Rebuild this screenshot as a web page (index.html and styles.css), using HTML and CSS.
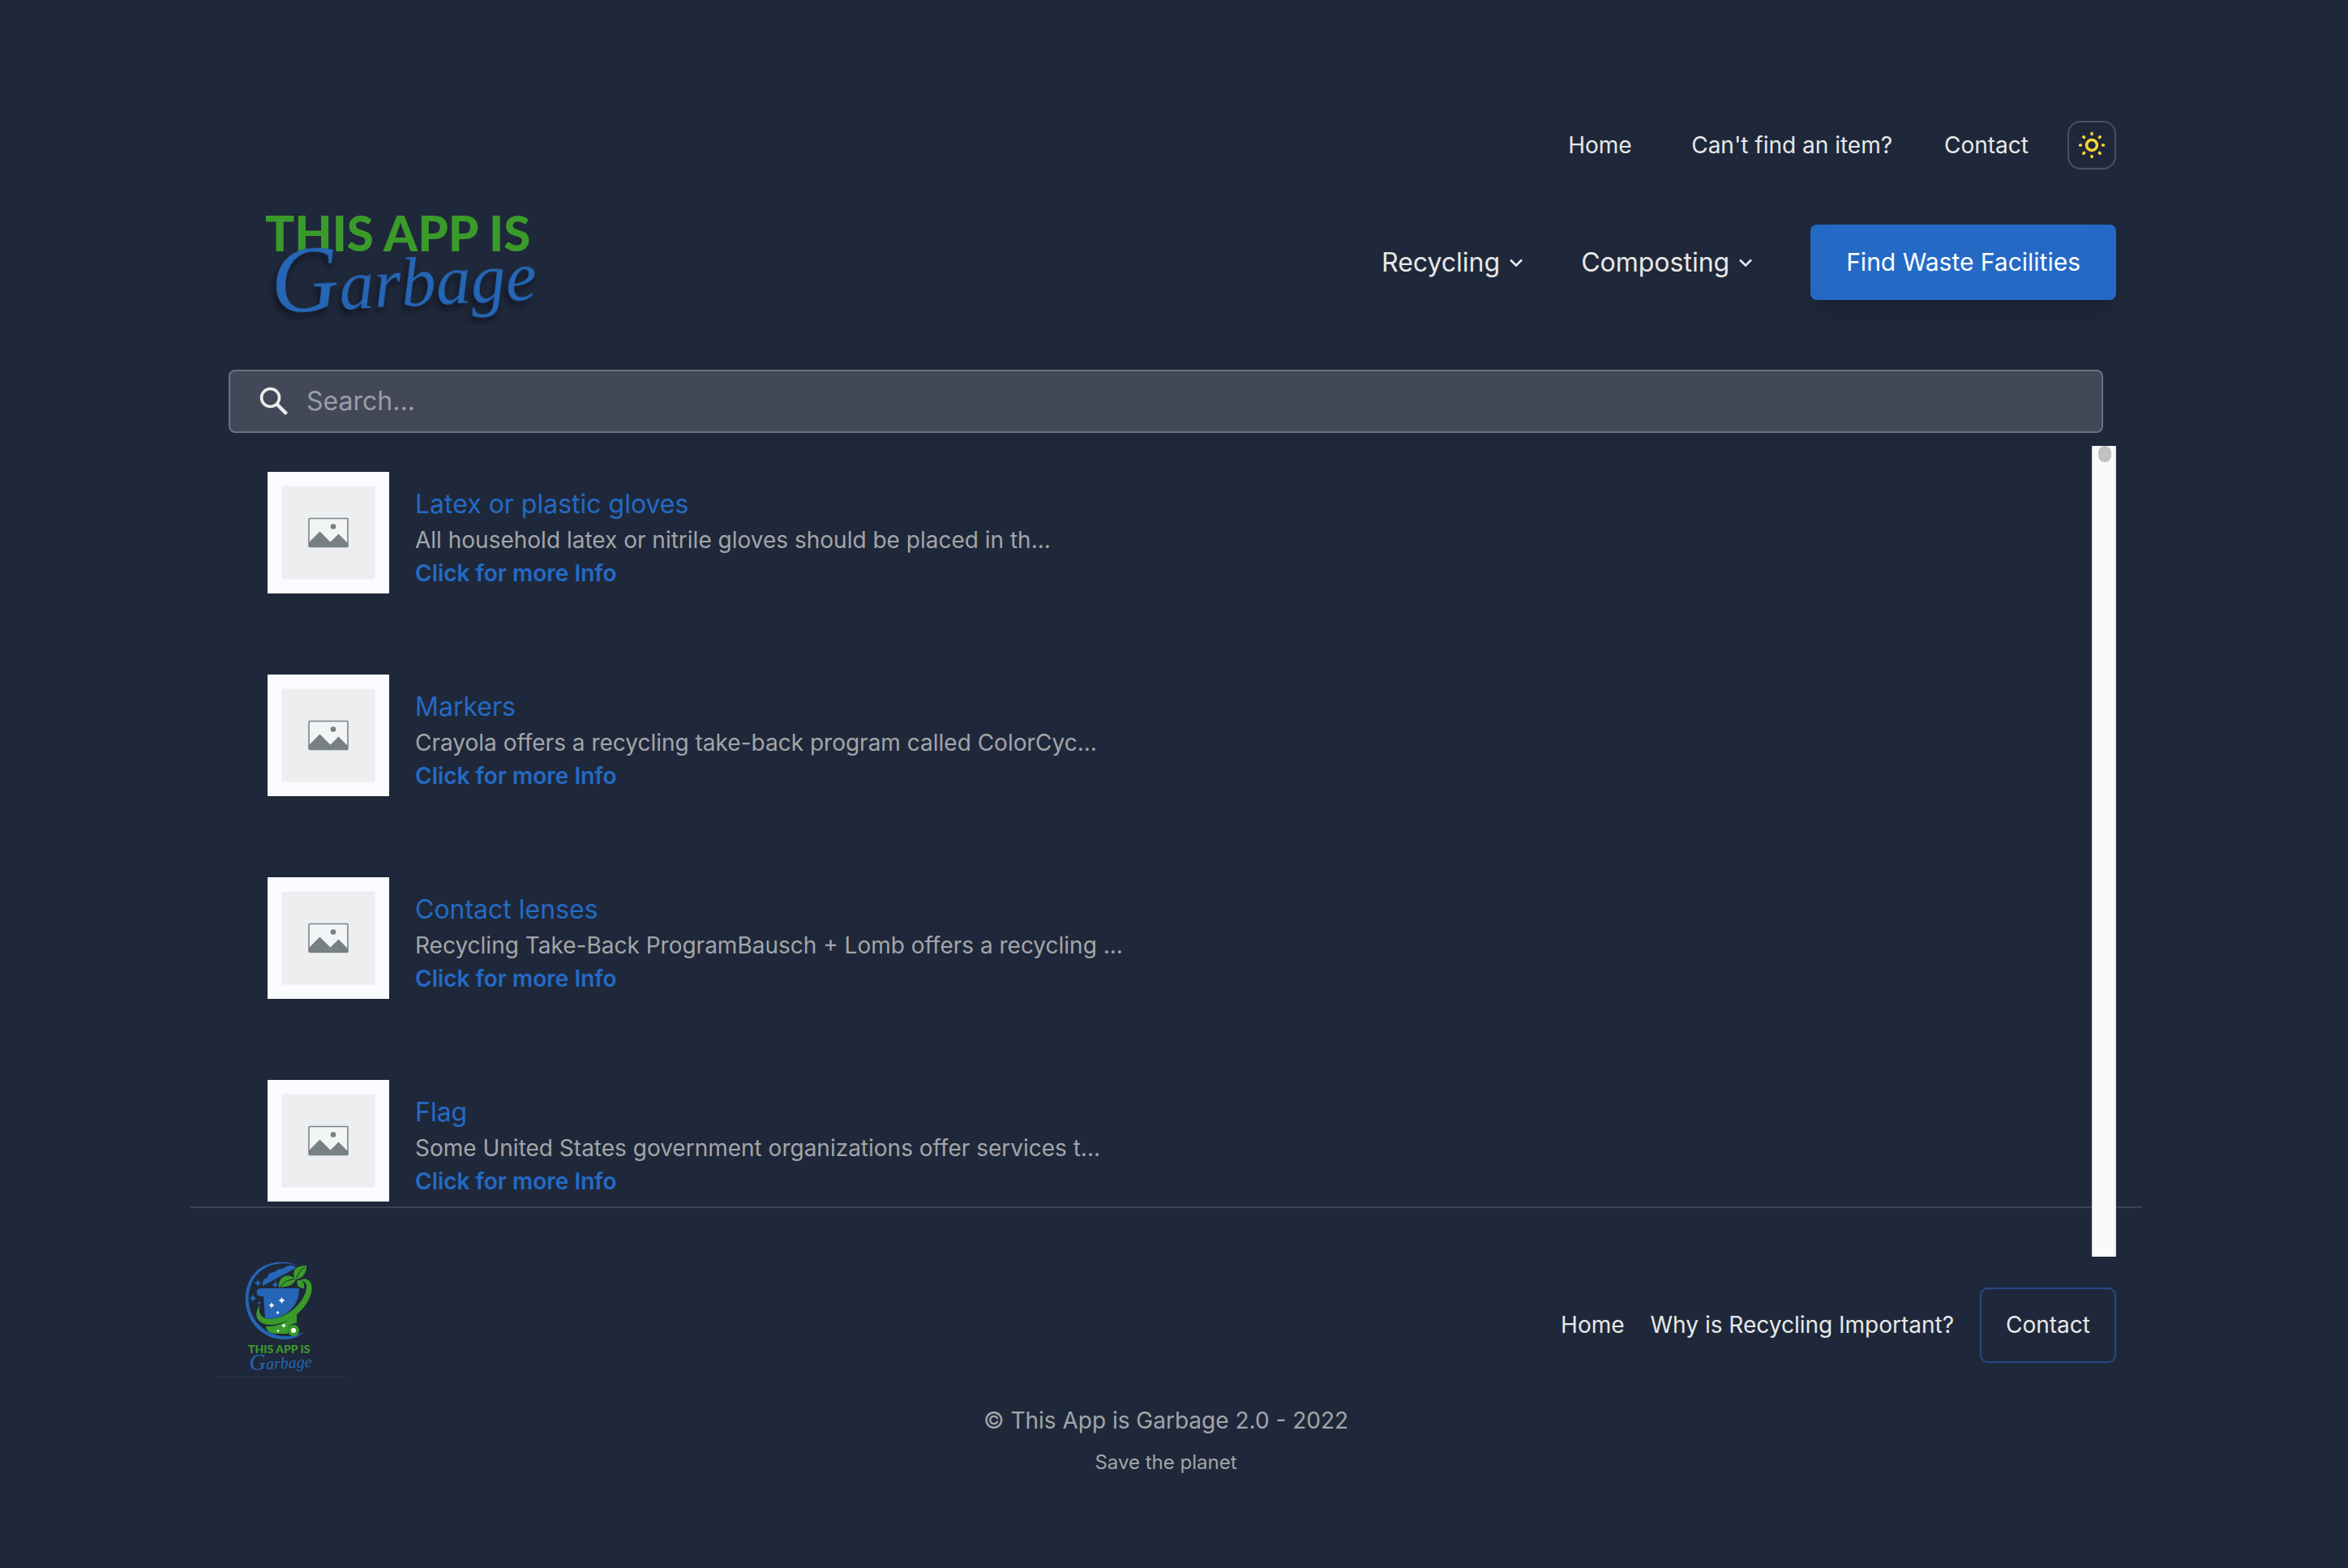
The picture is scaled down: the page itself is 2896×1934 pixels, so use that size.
FILE: index.html
```html
<!DOCTYPE html>
<html lang="en">
<head>
<meta charset="utf-8">
<meta name="viewport" content="width=device-width, initial-scale=1">
<title>This App is Garbage</title>
<link rel="stylesheet" href="styles.css">
</head>
<body>
<svg class="sprite" aria-hidden="true">
  <symbol id="chevron" viewBox="0 0 16 16"><path d="M1 4.500l7 7 7-7" fill="none" stroke="currentColor" stroke-width="2.600"/></symbol>
  <symbol id="picture" viewBox="0 0 150 150">
    <rect width="150" height="150" fill="#fafcff"/>
    <rect x="17.500" y="17.500" width="115" height="115" fill="#eceef0"/>
    <rect x="51" y="57.500" width="48" height="35" rx="1" fill="#f2f4f5" stroke="#7c8488" stroke-width="1.600"/>
    <path d="M51 87L64.500 73.500 77.500 86.500 87.500 76.500 99 88V92.500H51Z" fill="#778083"/>
    <circle cx="81" cy="67.500" r="3.300" fill="#778083"/>
  </symbol>
  <symbol id="spark" viewBox="-10 -10 20 20"><path d="M0-10Q1.500-1.500 10 0 1.500 1.500 0 10-1.500 1.500-10 0-1.500-1.500 0-10Z" fill="currentColor"/></symbol>
</svg>
<div class="page">
  <header class="header">
    <nav class="top-nav" aria-label="Site">
      <a href="#" class="top-link">Home</a>
      <a href="#" class="top-link">Can't find an item?</a>
      <a href="#" class="top-link">Contact</a>
    </nav>
    <button class="theme-toggle" type="button" aria-label="Switch theme">
      <svg width="36" height="36" viewBox="0 0 36 36" fill="none" stroke="#fcd635" stroke-width="3.500">
        <circle cx="18" cy="18" r="6.500"/>
        <g stroke-linecap="round"><path d="M18 3.500v1M18 31.500v1M3.500 18h1M31.500 18h1M7.800 7.800l.8.8M27.400 27.400l.8.8M7.800 28.200l.8-.8M27.400 8.600l.8-.8"/></g>
      </svg>
    </button>
  </header>
  <div class="masthead">
    <a href="#" class="brand" aria-label="This App is Garbage">
      <svg width="420" height="151" viewBox="0 0 420 151">
        <text class="logo-caps" x="61" y="62">THIS APP IS</text>
        <text class="logo-script" transform="rotate(-3 72 138)" x="70" y="138"><tspan class="logo-initial">G</tspan><tspan>arbage</tspan></text>
      </svg>
    </a>
    <nav class="main-nav" aria-label="Main">
      <button class="menu-button" type="button">Recycling<svg width="16" height="16"><use href="#chevron"/></svg></button>
      <button class="menu-button" type="button">Composting<svg width="16" height="16"><use href="#chevron"/></svg></button>
      <a href="#" class="cta">Find Waste Facilities</a>
    </nav>
  </div>
  <form class="search" role="search">
    <label class="search-icon" for="q" aria-label="Search">
      <svg width="36" height="36" viewBox="0 0 36 36" fill="none" stroke="#ececec"><circle cx="13.500" cy="13.500" r="11" stroke-width="3.600"/><path d="M21.500 21.500L33.500 33.500" stroke-width="4.500"/></svg>
    </label>
    <input class="search-input" id="q" type="text" placeholder="Search...">
  </form>
  <main class="results">
    <ul class="result-list">
      <li class="result">
        <svg class="thumb" width="150" height="150"><use href="#picture"/></svg>
        <div class="result-text"><h2 class="result-title">Latex or plastic gloves</h2><p class="result-desc">All household latex or nitrile gloves should be placed in th...</p><a href="#" class="result-link">Click for more Info</a></div>
      </li>
      <li class="result">
        <svg class="thumb" width="150" height="150"><use href="#picture"/></svg>
        <div class="result-text"><h2 class="result-title">Markers</h2><p class="result-desc">Crayola offers a recycling take-back program called ColorCyc...</p><a href="#" class="result-link">Click for more Info</a></div>
      </li>
      <li class="result">
        <svg class="thumb" width="150" height="150"><use href="#picture"/></svg>
        <div class="result-text"><h2 class="result-title">Contact lenses</h2><p class="result-desc">Recycling Take-Back ProgramBausch + Lomb offers a recycling ...</p><a href="#" class="result-link">Click for more Info</a></div>
      </li>
      <li class="result">
        <svg class="thumb" width="150" height="150"><use href="#picture"/></svg>
        <div class="result-text"><h2 class="result-title">Flag</h2><p class="result-desc">Some United States government organizations offer services t...</p><a href="#" class="result-link">Click for more Info</a></div>
      </li>
    </ul>
    <div class="scroll-track"><div class="scroll-thumb"></div></div>
  </main>
  <footer class="footer">
    <div class="footer-row">
      <a href="#" class="brand" aria-label="This App is Garbage">
        <svg width="160" height="160" viewBox="0 0 160 160">
          <g transform="translate(35 3)">
            <path d="M68 5C48-5 18-2 6 24-8 58 14 95 50 95 60 95 69 91 73 86 66 90 58 92 50 91 18 90-3 58 9 27 18 3 46-4 68 5Z" fill="#2566b5"/>
            <path d="M23 29C22 23 24 20 29 19 29 14 33 12 38 12 42 6 49 9 51 6 55 3 61 3 64 7Z" fill="#2566b5"/>
            <path d="M20 32H68C68 50 58 62 42 68 36 70 30 70 26 69L24 42H20C14 41 14 33 20 32Z" fill="#2566b5"/>
            <path d="M67 23C78 16 86 24 83 37 78 57 58 74 36 77 18 78 10 67 19 53 17 65 23 70 33 70 52 69 75 50 77 32 78 25 73 22 67 23Z" fill="#3a9b2a"/>
            <path d="M27 79C42 80 55 73 65 61V75C57 75 53 80 54 88H41C33 88 28 86 27 79Z" fill="#3a9b2a"/>
            <path d="M43 31C42 17 54 12 64 21 60 29 53 30 43 31ZM62 19C59 9 65 4 77 4 77 13 73 19 65 21ZM66 22C73 22 75 26 74 32 67 32 64 28 66 22Z" fill="#3a9b2a"/>
            <path d="M45 30Q51 21 62 21M65 19Q67 11 75 6" fill="none" stroke="#1f283a"/>
            <circle cx="61" cy="84" r="7" fill="#3a9b2a"/><circle cx="61" cy="84" r="3" fill="#fff"/>
            <g color="#fff"><use href="#spark" x="42" y="41" width="9" height="12"/><use href="#spark" x="30" y="47" width="8" height="12"/><use href="#spark" x="39" y="59" width="5" height="6"/><use href="#spark" x="46" y="74" width="6" height="8"/><use href="#spark" x="40" y="82" width="4" height="5"/></g>
            <g color="#2566b5"><use href="#spark" x="12" y="20" width="10" height="11"/><use href="#spark" x="6" y="38" width="10" height="12"/><use href="#spark" x="34" y="23" width="9" height="9"/><use href="#spark" x="16" y="47" width="5" height="6"/></g>
          </g>
          <text class="mark-caps" x="40" y="115">THIS APP IS</text>
          <text class="mark-script" transform="rotate(-3 42 136)" x="42" y="136"><tspan class="mark-initial">G</tspan><tspan>arbage</tspan></text>
          <rect y="144" width="160" height="1" fill="#2b3549"/>
        </svg>
      </a>
      <nav class="footer-nav" aria-label="Footer">
        <a href="#" class="footer-link">Home</a>
        <a href="#" class="footer-link">Why is Recycling Important?</a>
        <a href="#" class="footer-button">Contact</a>
      </nav>
    </div>
    <p class="copyright">© This App is Garbage 2.0 - 2022</p>
    <p class="tagline">Save the planet</p>
  </footer>
</div>
</body>
</html>
```
FILE: styles.css
```css
*{box-sizing:border-box}
body{margin:0;padding-right:20px;min-height:100vh;background:#1f283a;color:#e8e8e8;font:400 28px/40px Inter,"Noto Sans",sans-serif}
a{color:inherit;text-decoration:none}
button{font:inherit;color:inherit;background:none;border:0;padding:0}
svg{display:block}
h2,p,ul{margin:0;padding:0}
.sprite{position:absolute;width:0;height:0}
.page{max-width:2408px;margin:0 auto;padding-top:149px}
.header{display:flex;justify-content:flex-end;align-items:center;gap:48px;padding:0 32px}
.top-nav{display:flex;gap:64px}
.top-link{min-width:88px}
.theme-toggle{width:60px;height:60px;display:flex;align-items:center;justify-content:center;border:2px solid #4a5060;border-radius:16px}
.masthead{display:flex;justify-content:space-between;align-items:center;margin-top:39px;padding:0 32px}
.logo-caps,.mark-caps{font-family:Lato,"Liberation Sans",sans-serif;font-weight:900;fill:#3a9b2a}
.logo-script,.mark-script{font-family:"Liberation Serif",serif;font-style:italic;fill:#2566b5}
.logo-caps{font-size:60px}
.logo-script{font-size:86px;filter:drop-shadow(-3px 6px 4px #0d1220)}
.logo-initial{font-size:116px}
.mark-caps{font-size:14px}
.mark-script{font-size:20px}
.mark-initial{font-size:28px}
.main-nav{display:flex;align-items:center;gap:72px;font-size:32px}
.menu-button{display:flex;align-items:center;gap:12px}
.cta{padding:26px 44px 27px;font-size:30px;color:#fff;background:#246ac5;border-radius:8px;box-shadow:0 20px 30px -6px #1d2030}
.search{display:flex;align-items:center;gap:22px;height:78px;margin:57px 48px 0;padding:0 36px;background:#434859;border:2px solid #6c717e;border-radius:8px}
.search-input{flex:1;min-width:0;padding:0;border:0;outline:0;background:none;color:#e8e8e8;font:inherit;font-size:32px}
.search-input::placeholder{color:#9a9ca5;opacity:1}
.results{display:flex;margin:16px 32px 0}
.result-list{flex:1;padding-left:64px;list-style:none}
.result{display:flex;gap:32px;padding:32px 0 68px}
.result-text{padding-top:16px;line-height:41px}
.result-title{font-size:32px;font-weight:400;line-height:48px;color:#246ac5}
.result-desc{color:#a3a5a9}
.result-link{display:block;font-weight:600;color:#246ac5}
.scroll-track{position:relative;z-index:1;width:30px;padding:0 6px;background:#fafafa;border:solid #e8e8e8;border-width:0 2px}
.scroll-thumb{width:16px;height:20px;border-radius:8px;background:#c1c1c1}
.footer{margin-top:-62px;padding:64px 0 40px;border-top:2px solid #394152;text-align:center}
.footer-row{display:flex;justify-content:space-between;align-items:center;padding:0 32px}
.footer-nav{display:flex;align-items:center;gap:32px}
.footer-button{padding:24px 30px 25px;border:2px solid #234b86;border-radius:10px}
.copyright{margin-top:18px;color:#a3a5a9}
.tagline{margin-top:16px;font-size:24px;line-height:32px;color:#a3a5a9}
```
